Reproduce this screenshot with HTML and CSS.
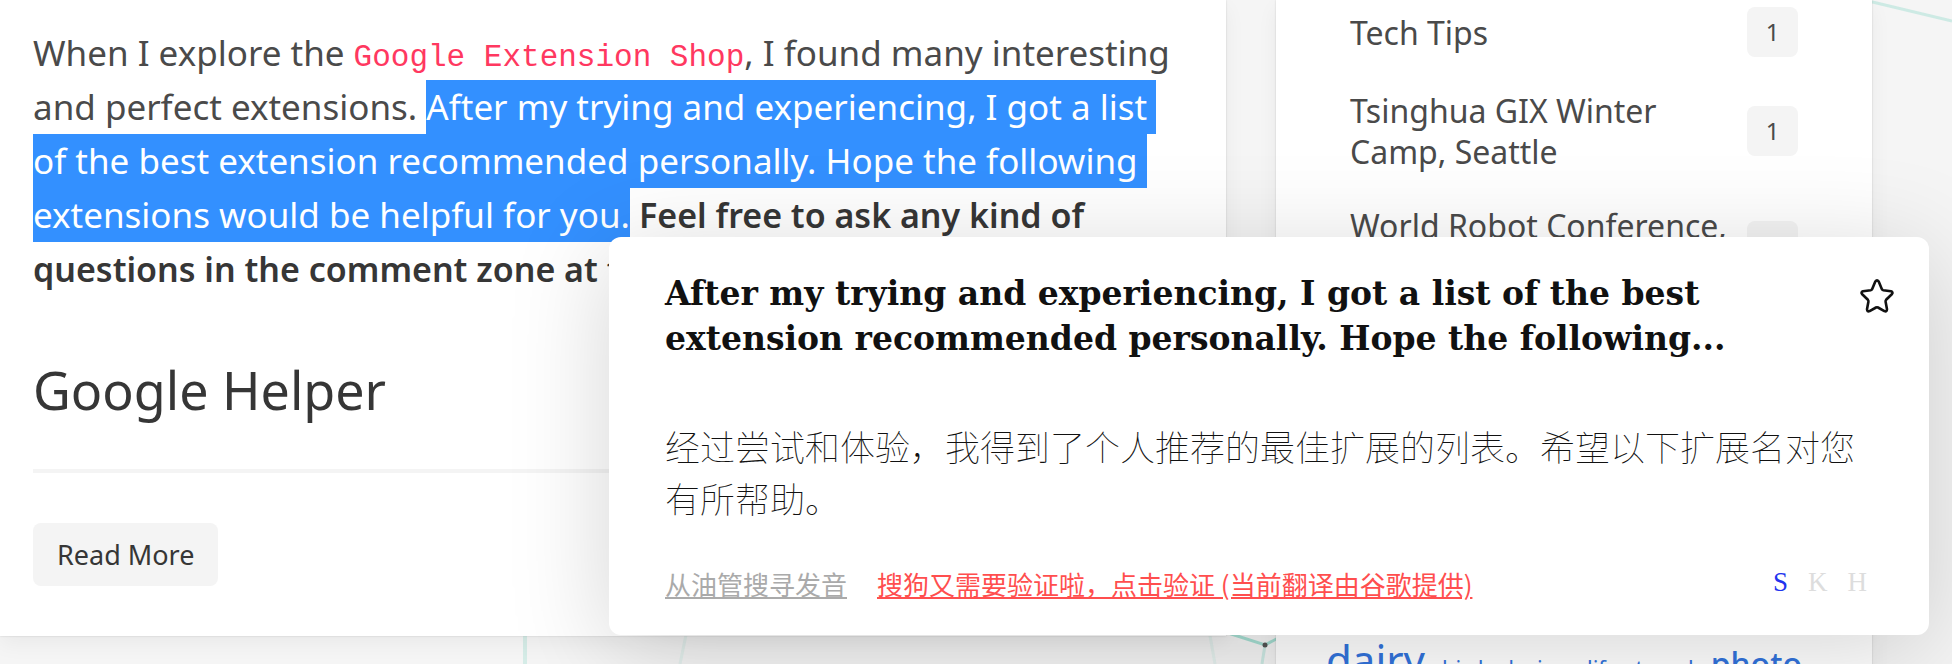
FILE: index.html
```html
<!DOCTYPE html>
<html lang="en">
<head>
<meta charset="utf-8">
<title>Google Helper</title>
<link rel="stylesheet" href="styles.css">
</head>
<body>
<svg class="web" aria-hidden="true" fill="none" stroke="#a6dfd3" stroke-width="3">
  <path d="M1860 -1L1952 21" opacity=".5"/>
  <path d="M525 630V664" stroke-width="4" opacity=".4"/>
  <path d="M687 630L680 664M1209 630L1215 664" opacity=".2"/>
  <path d="M1225 632L1265 645L1280 637"/>
  <path d="M1265 645L1262 664" opacity=".5"/>
  <circle cx="1265" cy="645" r="2.5" fill="#555" stroke="none"/>
</svg>
<div class="page">
  <article class="card post">
    <p class="text">When I explore the <code>Google Extension Shop</code>, I found many interesting<br>
    and perfect extensions. <mark>After my trying and experiencing, I got a list </mark><br>
    <mark>of the best extension recommended personally. Hope the following </mark><br>
    <mark>extensions would be helpful for you.</mark> <strong>Feel free to ask any kind of<br>
    questions in the comment zone at the bottom.</strong></p>
    <h1>Google Helper</h1>
    <hr>
    <a class="more" href="#">Read More</a>
  </article>
  <aside class="side">
    <ul class="card categories">
      <li><a href="#">Tech Tips</a><span class="count">1</span></li>
      <li><a href="#">Tsinghua GIX Winter<br>Camp, Seattle</a><span class="count">1</span></li>
      <li><a href="#">World Robot Conference,<br>&nbsp;</a><span class="count">1</span></li>
    </ul>
    <div class="card tags">
      <a class="large" href="#">dairy</a>
      <a href="#">bird</a>
      <a href="#">design</a>
      <a href="#">life</a>
      <a href="#">travel</a>
      <a class="medium" href="#">photo</a>
    </div>
  </aside>
</div>
<section class="popup" lang="zh-CN">
  <header>
    <h2 lang="en">After my trying and experiencing, I got a list of the best<br>extension recommended personally. Hope the following...</h2>
    <button class="star" aria-label="Star"><svg viewBox="0 0 36 36" fill="none" stroke="#111" stroke-width="2.6" stroke-linejoin="round"><path d="M16.300 3.500Q18 1.200 19.700 3.500L22.800 11Q23.200 12 24.300 12.200L32 13.300Q34.500 14.200 32.800 16.200L27.100 21.800Q26.400 22.600 26.600 23.700L28 31.300Q27.900 34 25.400 33.100L19 29.500Q18 29 17 29.500L10.600 33.100Q8.100 34 8 31.300L9.400 23.700Q9.600 22.600 8.900 21.800L3.200 16.200Q1.500 14.200 4 13.300L11.700 12.200Q12.800 12 13.200 11Z"/></svg></button>
  </header>
  <p class="translation">经过尝试和体验，我得到了个人推荐的最佳扩展的列表。希望以下扩展名对您有所帮助。</p>
  <footer>
    <a class="say" href="#">从油管搜寻发音</a>
    <a class="verify" href="#">搜狗又需要验证啦，点击验证 (当前翻译由谷歌提供)</a>
    <nav><a class="on" href="#">S</a><a href="#">K</a><a href="#">H</a></nav>
  </footer>
</section>
</body>
</html>
```
FILE: styles.css
```css
* { box-sizing: border-box; }
body {
  margin: 0;
  background: #f5f5f5;
  color: #4a4a4a;
  font-family: "Noto Sans", "Noto Sans CJK SC", sans-serif;
  overflow: hidden;
  position: relative;
  height: 100vh;
}
a { color: inherit; text-decoration: none; }
.web { position: absolute; top: 0; left: 0; width: 100%; height: 100%; }
.page {
  position: relative;
  display: grid;
  grid-template-columns: 1226fr 596fr;
  gap: 50px;
  padding-right: 80px;
  align-items: start;
}
.card {
  background: #fff;
  box-shadow: 0 8px 20px rgba(0, 0, 0, .05), 0 0 2px rgba(0, 0, 0, .15);
}
.post { padding: 26px 33px 50px; white-space: nowrap; }
.text { margin: 0 0 64px; font-size: 35px; line-height: 54px; }
code { font-family: "Liberation Mono", monospace; font-size: 31px; line-height: 1; color: #ff3860; }
mark { background: #3390ff; color: #fff; padding: 3px 0 4px; white-space: pre; }
strong { color: #363636; font-size: 34px; font-weight: 600; }
h1 { margin: 0 0 49px; font-size: 52px; line-height: 60px; font-weight: 400; color: #363636; }
hr { margin: 0 0 50px; border: 0; height: 4px; background: #f4f4f4; }
.more {
  display: inline-block;
  padding: 0 24px;
  border-radius: 8px;
  background: #f4f4f4;
  color: #363636;
  font-size: 27px;
  line-height: 63px;
}
.categories { margin: 0 0 50px; padding: 7px 74px 0; list-style: none; height: 560px; }
.categories li {
  display: flex;
  align-items: center;
  justify-content: space-between;
  margin-bottom: 33px;
  font-size: 32px;
  line-height: 41px;
}
.count {
  flex: none;
  width: 51px;
  border-radius: 8px;
  background: #f4f4f4;
  font-size: 24px;
  line-height: 50px;
  text-align: center;
}
.tags {
  display: flex;
  align-items: baseline;
  justify-content: space-between;
  padding: 20px 70px 50px 50px;
  color: #3273dc;
  font-size: 22px;
}
.large { font-size: 42px; line-height: 60px; }
.medium { font-size: 32px; font-weight: 500; }
.popup {
  position: absolute;
  top: 237px;
  left: 609px;
  right: 23px;
  padding: 34px 56px 31px;
  border-radius: 12px;
  background: #fff;
  color: #111;
  box-shadow: 0 16px 100px rgba(0, 0, 0, .17);
}
.popup header { display: flex; justify-content: space-between; margin: 0 -22px 59px 0; }
h2 { margin: 0; font: bold 33px/45px "DejaVu Serif", serif; white-space: nowrap; }
.star { width: 36px; height: 36px; margin-top: 7px; padding: 0; border: 0; background: none; }
.star svg { display: block; }
.translation { margin: 0 0 40px; font: 100 35px/52px "Noto Sans CJK SC", sans-serif; }
.popup footer { display: flex; align-items: flex-start; gap: 30px; font: 26px/40px "Noto Sans CJK SC", sans-serif; white-space: nowrap; }
.popup footer > a { text-decoration: underline; }
.say { color: #aaa; }
.verify { color: #ff4e4e; }
.popup nav { display: flex; gap: 20px; margin-left: auto; margin-right: 6px; font: 27px/36px "Liberation Serif", serif; color: #ddd; }
.on { color: #2233ee; }
```
